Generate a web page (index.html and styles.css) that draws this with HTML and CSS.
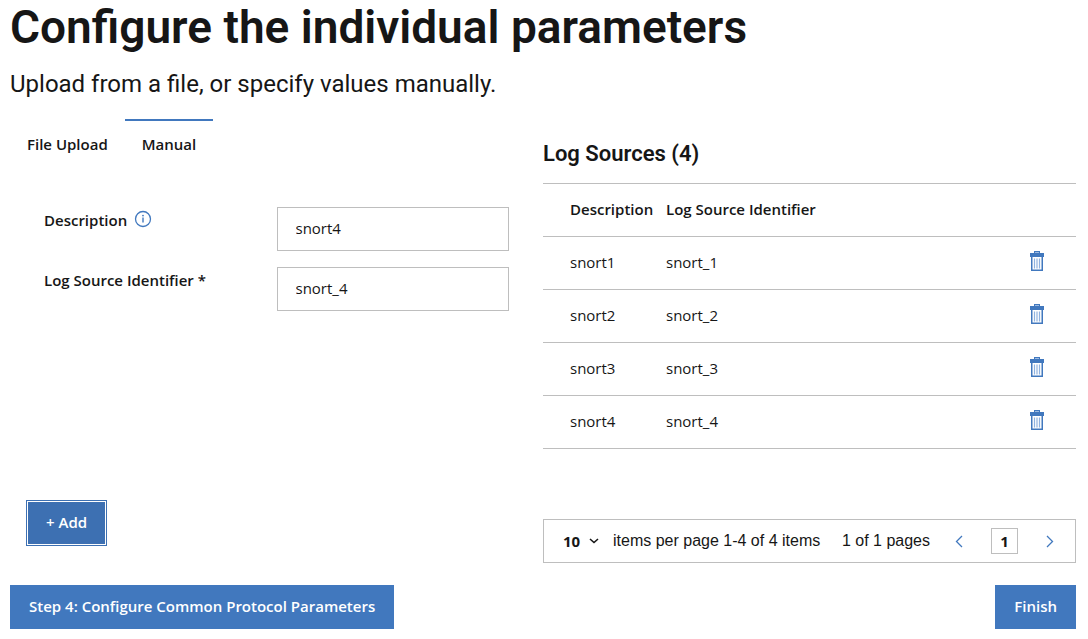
FILE: index.html
```html
<!DOCTYPE html>
<html lang="en">
<head>
<meta charset="utf-8">
<meta name="viewport" content="width=device-width, initial-scale=1">
<title>Configure the individual parameters</title>
<link rel="stylesheet" href="styles.css">
</head>
<body>
<svg class="sprite" aria-hidden="true">
  <symbol id="trash" viewBox="0 0 14 20">
    <path fill="#4178be" d="M4 0h6v2h4v4H0V2h4z"/>
    <path fill="#9dbbe2" d="M5 1h4v1H5z"/>
    <path fill="none" stroke="#4178be" stroke-width="1.5" d="M1.75 6v13.25h10.5V6"/>
    <path fill="none" stroke="#8fb2df" stroke-width="1.200" d="M4.500 7.500v10M7 7.500v10M9.500 7.500v10"/>
  </symbol>
</svg>
<main class="page">
  <header class="intro">
    <h1 class="title">Configure the individual parameters</h1>
    <p class="subtitle">Upload from a file, or specify values manually.</p>
  </header>

  <div class="columns">
    <section class="editor">
      <div class="tabs" role="tablist">
        <button class="tab" type="button" role="tab" aria-selected="false">File Upload</button>
        <button class="tab tab-active" type="button" role="tab" aria-selected="true">Manual</button>
      </div>
      <form class="fields">
        <div class="field">
          <div class="field-name">
            <label class="label" for="description">Description</label>
            <button class="info" type="button" aria-label="About the description">
              <svg width="18" height="18" viewBox="0 0 18 18" aria-hidden="true"><circle cx="9" cy="9" r="7.500" fill="none" stroke="#4178be" stroke-width="1.300"/><path d="M9 7.500v5" fill="none" stroke="#4178be" stroke-width="1.400"/><circle cx="9" cy="5.600" r=".9" fill="#4178be"/></svg>
            </button>
          </div>
          <input class="text-input" id="description" type="text" value="snort4">
        </div>
        <div class="field">
          <div class="field-name">
            <label class="label" for="identifier">Log Source Identifier *</label>
          </div>
          <input class="text-input" id="identifier" type="text" value="snort_4">
        </div>
      </form>
      <button class="button button-focused" type="button">+ Add</button>
    </section>

    <section class="sources">
      <h2 class="sources-title">Log Sources (4)</h2>
      <table class="table">
        <thead>
          <tr><th class="col-description">Description</th><th>Log Source Identifier</th><td class="col-action"></td></tr>
        </thead>
        <tbody>
          <tr><td>snort1</td><td>snort_1</td><td class="action"><button class="delete" type="button" aria-label="Delete snort1"><svg width="14" height="20" aria-hidden="true"><use href="#trash"/></svg></button></td></tr>
          <tr><td>snort2</td><td>snort_2</td><td class="action"><button class="delete" type="button" aria-label="Delete snort2"><svg width="14" height="20" aria-hidden="true"><use href="#trash"/></svg></button></td></tr>
          <tr><td>snort3</td><td>snort_3</td><td class="action"><button class="delete" type="button" aria-label="Delete snort3"><svg width="14" height="20" aria-hidden="true"><use href="#trash"/></svg></button></td></tr>
          <tr><td>snort4</td><td>snort_4</td><td class="action"><button class="delete" type="button" aria-label="Delete snort4"><svg width="14" height="20" aria-hidden="true"><use href="#trash"/></svg></button></td></tr>
        </tbody>
      </table>
      <nav class="pagination" aria-label="Pagination">
        <div class="page-size">
          <select class="select" aria-label="Items per page"><option>10</option><option>20</option><option>50</option></select>
          <svg class="chevron" width="10" height="6" viewBox="0 0 10 6" aria-hidden="true"><path d="M1 1l4 3.500L9 1" fill="none" stroke="#161616" stroke-width="1.600"/></svg>
        </div>
        <span class="range">items per page 1-4 of 4 items</span>
        <span class="count">1 of 1 pages</span>
        <button class="step" type="button" aria-label="Previous page"><svg width="8" height="13" viewBox="0 0 8 13" aria-hidden="true"><path d="M7 1L1.500 6.500 7 12" fill="none" stroke="#4178be" stroke-width="1.300"/></svg></button>
        <input class="page-number" type="text" value="1" aria-label="Page number">
        <button class="step" type="button" aria-label="Next page"><svg width="8" height="13" viewBox="0 0 8 13" aria-hidden="true"><path d="M1 1l5.500 5.500L1 12" fill="none" stroke="#4178be" stroke-width="1.300"/></svg></button>
      </nav>
    </section>
  </div>

  <footer class="footer">
    <button class="button" type="button">Step 4: Configure Common Protocol Parameters</button>
    <button class="button" type="button">Finish</button>
  </footer>
</main>
</body>
</html>
```

FILE: styles.css
```css
* {
  box-sizing: border-box;
}

body {
  margin: 0;
  background: #fff;
  color: #161616;
  font-family: "Open Sans", "Liberation Sans", sans-serif;
  font-size: 15px;
  line-height: 20px;
}

button,
input,
select {
  font: inherit;
  color: inherit;
}

button {
  padding: 0;
  border: 0;
  background: none;
  cursor: pointer;
}

svg {
  display: block;
}

.sprite {
  display: none;
}

.page {
  padding: 0 12px 10px 10px;
}

.title {
  margin: 0;
  font-family: Roboto, sans-serif;
  font-size: 46px;
  font-weight: 600;
  line-height: 54px;
}

.subtitle {
  margin: 14px 0 0;
  font-family: Roboto, sans-serif;
  font-size: 24px;
  line-height: 32px;
}

.columns {
  display: grid;
  grid-template-columns: 499fr 533fr;
  column-gap: 34px;
  margin-top: 19px;
}

.editor {
  display: flex;
  flex-direction: column;
  align-items: stretch;
}

.tabs {
  display: flex;
}

.tab {
  padding: 13px 17px 17px;
  border-top: 2px solid transparent;
  font-weight: 600;
}

.tab-active {
  border-top-color: #4178be;
}

.fields {
  display: grid;
  row-gap: 16px;
  margin-top: 36px;
  padding-left: 34px;
}

.field {
  display: grid;
  grid-template-columns: 1fr 1fr;
}

.field-name {
  display: flex;
  gap: 7px;
  padding-top: 3px;
}

.label {
  font-weight: 600;
}

.info {
  align-self: flex-start;
}

.text-input {
  width: 100%;
  height: 44px;
  padding: 0 18px 2px;
  border: 1px solid #bebebe;
  background: #fff;
}

.button {
  min-height: 44px;
  padding: 0 19px 2px;
  background: #4178be;
  color: #fff;
  font-weight: 600;
}

.button-focused {
  align-self: flex-start;
  margin: auto 0 17px 16px;
  min-height: 46px;
  border: 1px solid #3d70b2;
  background: #3d70b2;
  box-shadow: inset 0 0 0 1px #fff;
}

.sources {
  display: flex;
  flex-direction: column;
}

.sources-title {
  margin: 20px 0 14px;
  font-family: Roboto, sans-serif;
  font-size: 22px;
  font-weight: 600;
  line-height: 30px;
}

.table {
  width: 100%;
  border-collapse: collapse;
  border-top: 1px solid #bebebe;
}

.table th,
.table td {
  height: 53px;
  padding: 0 0 3px;
  border-bottom: 1px solid #bebebe;
  text-align: left;
}

.table .action {
  padding-bottom: 0;
}

.table th {
  font-weight: 600;
}

.table th:first-child,
.table td:first-child {
  padding-left: 27px;
}

.col-description {
  width: 123px;
}

.col-action {
  width: 46px;
}

.pagination {
  display: flex;
  align-items: center;
  height: 44px;
  margin-top: 70px;
  padding: 0 21px 0 19px;
  border: 1px solid #bebebe;
  font-family: "Liberation Sans", sans-serif;
  font-size: 16px;
}

.page-size {
  display: grid;
  grid-template-columns: 26px 10px;
  align-items: center;
  margin-right: 14px;
}

.select {
  grid-area: 1 / 1 / 2 / 3;
  padding: 0;
  border: 0;
  appearance: none;
  background: none;
  font-family: "Open Sans", sans-serif;
  font-size: 15px;
  font-weight: 700;
}

.chevron {
  grid-area: 1 / 2;
  pointer-events: none;
}

.range {
  margin-right: auto;
}

.count {
  margin-right: 25px;
}

.page-number {
  width: 27px;
  height: 26px;
  margin: 0 28px;
  padding: 0;
  border: 1px solid #bebebe;
  background: #fff;
  font-family: "Open Sans", sans-serif;
  font-size: 15px;
  font-weight: 700;
  text-align: center;
}

.footer {
  display: flex;
  justify-content: space-between;
  margin-top: 22px;
}
```
